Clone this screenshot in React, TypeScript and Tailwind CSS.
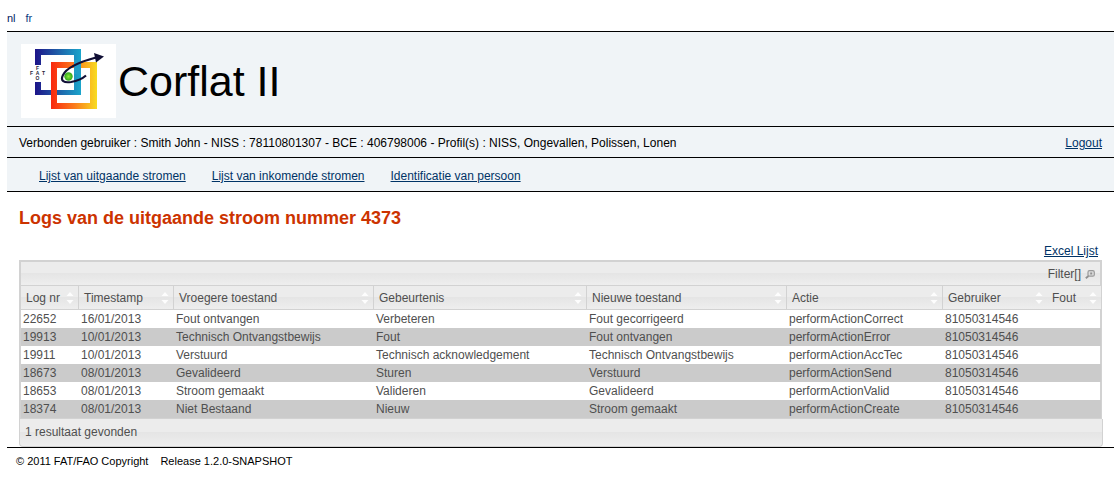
import React from 'react';

const navLinks = [
  'Lijst van uitgaande stromen',
  'Lijst van inkomende stromen',
  'Identificatie van persoon',
];

const columns = [
  { label: 'Log nr', width: 'w-[58px]', divider: true },
  { label: 'Timestamp', width: 'w-[95px]', divider: true },
  { label: 'Vroegere toestand', width: 'w-[200px]', divider: true },
  { label: 'Gebeurtenis', width: 'w-[213px]', divider: true },
  { label: 'Nieuwe toestand', width: 'w-[200px]', divider: true },
  { label: 'Actie', width: 'w-[156px]', divider: true },
  { label: 'Gebruiker', width: 'w-[104px]', divider: false },
  { label: 'Fout', width: 'w-[54px]', divider: false },
];

const logs = [
  ['22652', '16/01/2013', 'Fout ontvangen', 'Verbeteren', 'Fout gecorrigeerd', 'performActionCorrect', '81050314546', ''],
  ['19913', '10/01/2013', 'Technisch Ontvangstbewijs', 'Fout', 'Fout ontvangen', 'performActionError', '81050314546', ''],
  ['19911', '10/01/2013', 'Verstuurd', 'Technisch acknowledgement', 'Technisch Ontvangstbewijs', 'performActionAccTec', '81050314546', ''],
  ['18673', '08/01/2013', 'Gevalideerd', 'Sturen', 'Verstuurd', 'performActionSend', '81050314546', ''],
  ['18653', '08/01/2013', 'Stroom gemaakt', 'Valideren', 'Gevalideerd', 'performActionValid', '81050314546', ''],
  ['18374', '08/01/2013', 'Niet Bestaand', 'Nieuw', 'Stroom gemaakt', 'performActionCreate', '81050314546', ''],
];

const Logo = () => (
  <svg viewBox="0 0 95 74" className="w-[95px] h-[74px] shrink-0" role="img" aria-label="FAT FAO">
    <defs>
      <linearGradient id="blue" x1="0" x2="1">
        <stop offset="0" stopColor="#1d1489" />
        <stop offset="0.5" stopColor="#1f5fa8" />
        <stop offset="1" stopColor="#1ba6cc" />
      </linearGradient>
      <linearGradient id="fire" x1="0" x2="1">
        <stop offset="0" stopColor="#f9280f" />
        <stop offset="0.5" stopColor="#fb7a1c" />
        <stop offset="1" stopColor="#f8dc22" />
      </linearGradient>
      <radialGradient id="ball">
        <stop offset="0" stopColor="#8be83a" />
        <stop offset="1" stopColor="#2da51c" />
      </radialGradient>
    </defs>
    <rect width="95" height="74" fill="#fff" />
    {/* Blue frame, open on the left for the letters */}
    <path d="M14 21V5h46v46H14V38h6v8h33V11H20v10z" fill="url(#blue)" />
    {/* Red to yellow frame, passing behind the blue one at the top */}
    <path fillRule="evenodd" d="M30 18h46v47H30zM36 24v35h33V24z" fill="url(#fire)" />
    <path d="M53 16h7v14h-7z" fill="#1f9dc8" />
    <circle cx="47.500" cy="32.500" r="4.200" fill="url(#ball)" />
    {/* Orbit with arrow head */}
    <path d="M75 13.500C62 17 46 23 42 31c-3 6 1 8 8 7 6-1 11-3 15-6.500" fill="none" stroke="#100f35" strokeWidth="2.200" />
    <path d="M73 9l10 3.500-8 6z" fill="#100f35" />
    <g fontFamily="Liberation Sans, Arial, sans-serif" fontSize="5" fontWeight="bold" fill="#26263a" textAnchor="middle">
      <text x="16.500" y="26">F</text>
      <text x="10.500" y="31">F</text>
      <text x="16.500" y="31">A</text>
      <text x="22.500" y="31">T</text>
      <text x="16.500" y="36">O</text>
    </g>
  </svg>
);

const SortIcon = () => (
  <svg viewBox="0 0 8 12" className="w-2 h-3 shrink-0" aria-hidden="true">
    <path d="M4 0l3.500 4h-7zM4 12l3.500-4h-7z" fill="#fff" fillOpacity="0.9" />
  </svg>
);

const FilterIcon = () => (
  <svg viewBox="0 0 10 9" className="w-2.5 h-[9px]" aria-hidden="true">
    <rect x="3" y="0.700" width="6.300" height="5.500" rx="1.500" fill="#ddd" stroke="#999" strokeWidth="1.200" />
    <rect x="5.200" y="2.500" width="2" height="2" fill="#909090" />
    <path d="M3.500 6L0.800 8.300" stroke="#909090" strokeWidth="1.800" />
  </svg>
);

const App = () => {
  return (
    <div className="pl-[7px] pr-[5px] font-['Liberation_Sans',Arial,sans-serif] text-xs text-black">
      {/* Language switch */}
      <div className="flex h-[31px] items-end gap-2.5 pb-1.5 text-[11px] leading-[14px]">
        <a href="#nl" className="text-[#002060]">nl</a>
        <a href="#fr" className="text-[#0b3a80]">fr</a>
      </div>

      <header className="bg-[#f0f4f7]">
        <div className="flex items-center gap-0.5 border-t border-black pl-3.5 pt-3 pb-2">
          <Logo />
          <h1 className="text-[43px] leading-[48px]">Corflat II</h1>
        </div>

        <div className="flex items-center justify-between border-t border-black px-3 pt-2 pb-1.5 leading-4">
          <span>Verbonden gebruiker : Smith John - NISS : 78110801307 - BCE : 406798006 - Profil(s) : NISS, Ongevallen, Polissen, Lonen</span>
          <a href="#logout" className="text-[#003366] underline">Logout</a>
        </div>

        <nav className="flex gap-[26px] border-y border-black pl-8 pt-[10px] pb-[7px] leading-4">
          {navLinks.map((label) => (
            <a key={label} href="#stromen" className="text-[#003366] underline">{label}</a>
          ))}
        </nav>
      </header>

      <main className="pl-3 pr-[11px]">
        <h2 className="pt-4 text-lg leading-5 font-bold text-[#cc3300]">Logs van de uitgaande stroom nummer 4373</h2>

        <div className="flex justify-end pt-[15px] pr-[5px] leading-4">
          <a href="#excel" className="text-[#003366] underline">Excel Lijst</a>
        </div>

        <div className="mr-px mt-px border-2 border-b border-[#d2d2d2] text-[#4f4f4f]">
          <div className="flex h-[23px] items-center justify-end gap-1 bg-[linear-gradient(#ececec_50%,#e5e5e5_50%,#eeeeee)] pr-[5px]">
            <span>Filter[]</span>
            <button type="button" aria-label="Filter" className="pt-0.5">
              <FilterIcon />
            </button>
          </div>
          <table className="w-full table-fixed border-separate border-spacing-0">
            <thead>
              <tr>
                {columns.map((col) => (
                  <th
                    key={col.label}
                    className={`h-[25px] border-y border-[#d2d2d2] bg-[linear-gradient(#ececec_50%,#e5e5e5_50%,#eeeeee)] p-0 font-normal ${col.width} ${col.divider ? 'border-r' : ''}`}
                  >
                    <div className="flex items-center justify-between pl-[5px] pr-1">
                      <span className="whitespace-nowrap">{col.label}</span>
                      <SortIcon />
                    </div>
                  </th>
                ))}
              </tr>
            </thead>
            <tbody>
              {logs.map((row) => (
                <tr key={row[0]} className="even:bg-[#cbcbcb]">
                  {row.map((cell, index) => (
                    <td key={index} className="h-[18px] whitespace-nowrap p-0 pl-0.5 leading-4">{cell}</td>
                  ))}
                </tr>
              ))}
            </tbody>
          </table>
        </div>
        <div className="h-[28px] rounded-b border border-t-0 border-[#d2d2d2] bg-[linear-gradient(#ececec_50%,#e5e5e5_50%,#eeeeee)] pl-[5px] leading-[26px] text-[#4f4f4f]">
          1 resultaat gevonden
        </div>
      </main>

      <footer className="flex gap-3 border-t border-black pl-[9px] pt-[5px] text-[11px] leading-4">
        <span>© 2011 FAT/FAO Copyright</span>
        <span>Release 1.2.0-SNAPSHOT</span>
      </footer>
    </div>
  );
};

export default App;
